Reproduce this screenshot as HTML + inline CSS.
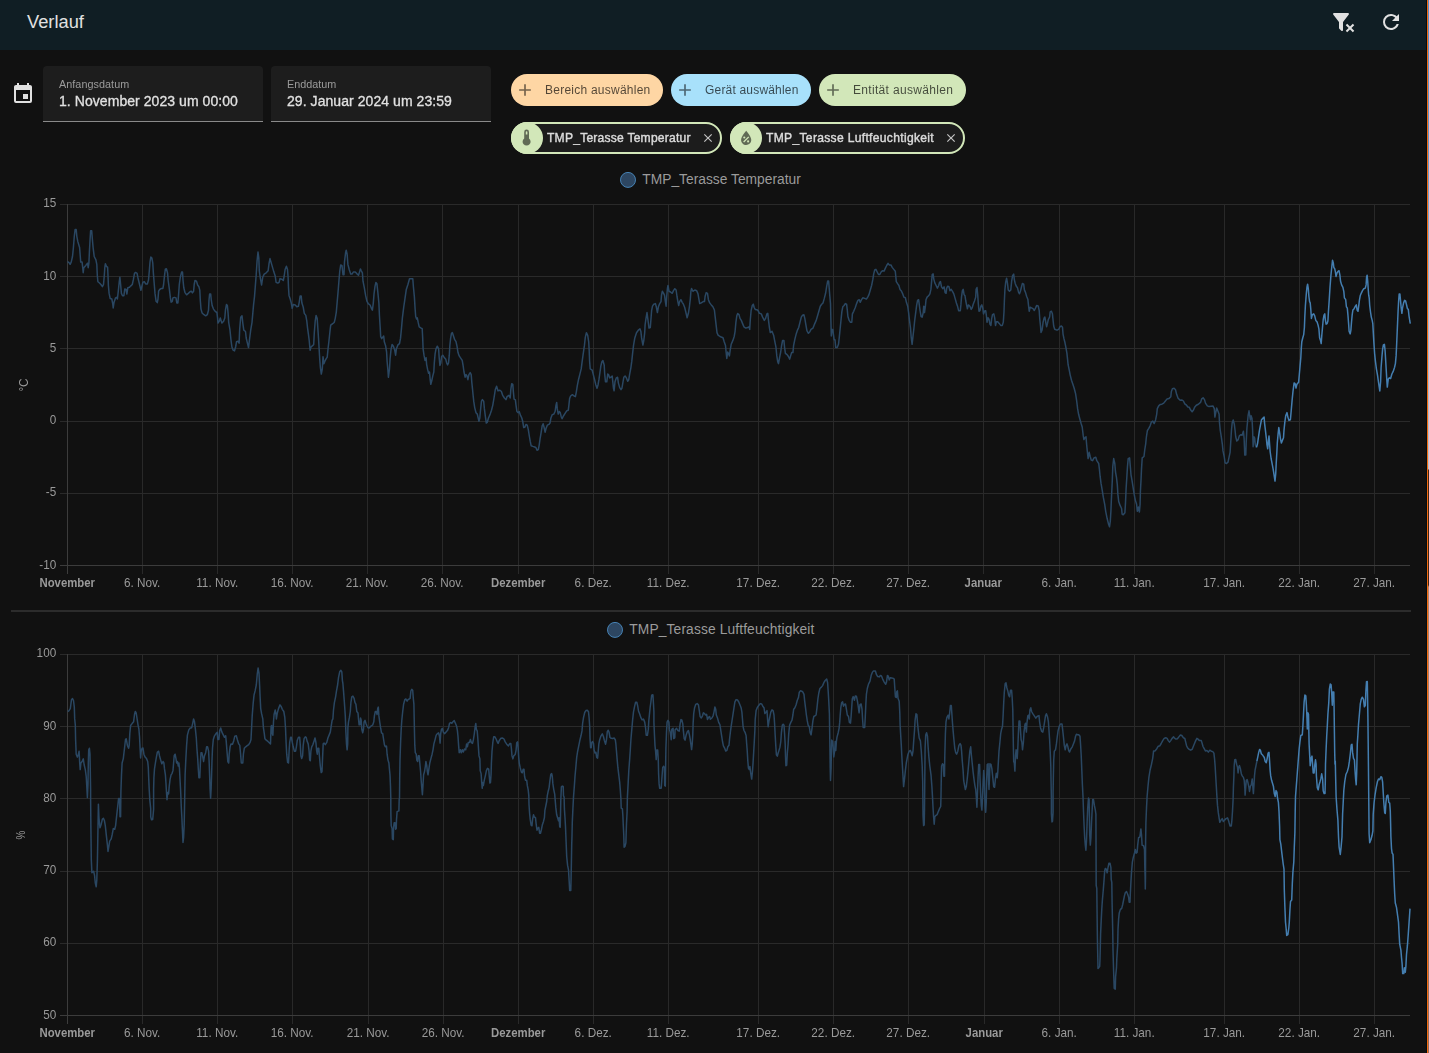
<!DOCTYPE html>
<html lang="de">
<head>
<meta charset="utf-8">
<title>Verlauf – Home Assistant</title>
<style>
html,body{margin:0;padding:0;background:#111111;}
body{width:1429px;height:1053px;overflow:hidden;position:relative;font-family:"Liberation Sans",sans-serif;color:#e1e1e1;}
#app{position:absolute;left:0;top:0;width:1429px;height:1053px;overflow:hidden;background:#111111;}
header{position:absolute;left:0;top:0;width:1427px;height:50px;background:#101e24;}
.grp{position:static;display:block;margin:0;padding:0;font:inherit;}
.t{position:absolute;white-space:pre;line-height:1;font-weight:400;}
.ic{position:absolute;display:block;}
.field{position:absolute;top:66px;width:220px;height:55px;background:#1d1d1d;border-radius:4px 4px 0 0;border-bottom:1px solid #8a8a8a;}
.chip{position:absolute;height:32px;border-radius:16px;box-sizing:border-box;}
.chip.sel{border:2px solid #d2e7b9;background:#1c1c1c;}
.chip .lead{position:absolute;left:-2px;top:-2px;width:32px;height:32px;border-radius:50%;background:#d2e7b9;}
svg.charts{position:absolute;left:0;top:160px;}
svg.charts text{font-family:"Liberation Sans",sans-serif;}
.tk{font-size:12.3px;fill:#9b9b9b;}
.tk.b{font-weight:700;}
.lg{font-size:13.8px;fill:#9b9b9b;}
.edge{position:absolute;top:0;width:1px;height:1053px;}
</style>
</head>
<body>
<div id="app">
<header class="toolbar">
<h1 class="grp"><span class="t" style="left:27px;top:12.51px;font-size:18.3px;color:#e1e1e1;">Verlauf</span></h1>
<div class="grp" role="button" aria-label="Filter entfernen"><svg class="ic" style="left:1331px;top:10px;width:24px;height:24px;" viewBox="0 0 24 24"><path fill="#e1e1e1" d="M14.76,20.83L17.6,18L14.76,15.17L16.17,13.76L19,16.57L21.83,13.76L23.24,15.17L20.43,18L23.24,20.83L21.83,22.24L19,19.4L16.17,22.24L14.76,20.83M12,12V19.88C12.04,20.18 11.94,20.5 11.71,20.71C11.32,21.1 10.69,21.1 10.3,20.71L8.29,18.7C8.06,18.47 7.96,18.16 8,17.87V12H7.97L2.21,4.62C1.87,4.19 1.95,3.56 2.38,3.22C2.57,3.08 2.78,3 3,3V3H17V3C17.22,3 17.43,3.08 17.62,3.22C18.05,3.56 18.13,4.19 17.79,4.62L12.03,12H12Z"/></svg></div>
<div class="grp" role="button" aria-label="Aktualisieren"><svg class="ic" style="left:1379px;top:10px;width:24px;height:24px;" viewBox="0 0 24 24"><path fill="#e1e1e1" d="M17.65,6.35C16.2,4.9 14.21,4 12,4A8,8 0 0,0 4,12A8,8 0 0,0 12,20C15.73,20 18.84,17.45 19.73,14H17.65C16.83,16.33 14.61,18 12,18A6,6 0 0,1 6,12A6,6 0 0,1 12,6C13.66,6 15.14,6.69 16.22,7.78L13,11H20V4L17.65,6.35Z"/></svg></div>
</header>
<main>
<section class="filters">
<div class="grp date-range-picker">
<svg class="ic" style="left:11px;top:81.7px;width:24px;height:24px;" viewBox="0 0 24 24"><path fill="#e1e1e1" d="M19,19H5V8H19M16,1V3H8V1H6V3H5C3.89,3 3,3.89 3,5V19A2,2 0 0,0 5,21H19A2,2 0 0,0 21,19V5C21,3.89 20.1,3 19,3H18V1M17,12H12V17H17V12Z"/></svg>
<label class="grp textfield">
<div class="field" style="left:43px"></div>
<span class="t" style="left:59px;top:79px;font-size:10.8px;color:#9b9b9b;letter-spacing:0.05px;will-change:transform;">Anfangsdatum</span>
<span class="t" style="left:59px;top:94px;font-size:14px;color:#e1e1e1;letter-spacing:0.06px;-webkit-text-stroke:0.3px #e1e1e1;will-change:transform;">1. November 2023 um 00:00</span>
</label>
<label class="grp textfield">
<div class="field" style="left:271px"></div>
<span class="t" style="left:287px;top:79px;font-size:10.8px;color:#9b9b9b;will-change:transform;">Enddatum</span>
<span class="t" style="left:287px;top:94px;font-size:14px;color:#e1e1e1;letter-spacing:0.06px;-webkit-text-stroke:0.3px #e1e1e1;will-change:transform;">29. Januar 2024 um 23:59</span>
</label>
</div>
<div class="grp target-picker">
<div class="grp add-chips">
<div class="grp" role="button">
<div class="chip" style="left:511px;top:74px;width:152px;background:#fed6a4"></div>
<svg class="ic" style="left:515px;top:80px;width:20px;height:20px;" viewBox="0 0 24 24"><path fill="rgba(0,0,0,0.54)" d="M19,13H13V19H11V13H5V11H11V5H13V11H19V13Z"/></svg>
<span class="t" style="left:545px;top:84px;font-size:12px;color:rgba(0,0,0,0.68);letter-spacing:0.24px;will-change:transform;">Bereich auswählen</span>
</div>
<div class="grp" role="button">
<div class="chip" style="left:671px;top:74px;width:140px;background:#a8e1fb"></div>
<svg class="ic" style="left:675px;top:80px;width:20px;height:20px;" viewBox="0 0 24 24"><path fill="rgba(0,0,0,0.54)" d="M19,13H13V19H11V13H5V11H11V5H13V11H19V13Z"/></svg>
<span class="t" style="left:705px;top:84px;font-size:12px;color:rgba(0,0,0,0.68);letter-spacing:0.19px;will-change:transform;">Gerät auswählen</span>
</div>
<div class="grp" role="button">
<div class="chip" style="left:819px;top:74px;width:147px;background:#d2e7b9"></div>
<svg class="ic" style="left:823px;top:80px;width:20px;height:20px;" viewBox="0 0 24 24"><path fill="rgba(0,0,0,0.54)" d="M19,13H13V19H11V13H5V11H11V5H13V11H19V13Z"/></svg>
<span class="t" style="left:853px;top:84px;font-size:12px;color:rgba(0,0,0,0.68);letter-spacing:0.32px;will-change:transform;">Entität auswählen</span>
</div>
</div>
<div class="grp selected-chips">
<div class="grp entity-chip">
<div class="chip sel" style="left:511px;top:122px;width:211px"><div class="lead"></div></div>
<svg class="ic" style="left:517.4px;top:128.4px;width:19.2px;height:19.2px;" viewBox="0 0 24 24"><path fill="rgba(0,0,0,0.54)" d="M15 13V5A3 3 0 0 0 9 5V13A5 5 0 1 0 15 13M12 4A1 1 0 0 1 13 5V8H11V5A1 1 0 0 1 12 4Z"/></svg>
<span class="t" style="left:547px;top:132px;font-size:12.1px;color:#dcdcdc;letter-spacing:0.22px;-webkit-text-stroke:0.4px #dcdcdc;will-change:transform;">TMP_Terasse Temperatur</span>
<svg class="ic" style="left:701px;top:131.2px;width:14px;height:14px;" viewBox="0 0 24 24"><path fill="#c4c4c4" d="M19,6.41L17.59,5L12,10.59L6.41,5L5,6.41L10.59,12L5,17.59L6.41,19L12,13.41L17.59,19L19,17.59L13.41,12L19,6.41Z"/></svg>
</div>
<div class="grp entity-chip">
<div class="chip sel" style="left:730px;top:122px;width:235px"><div class="lead"></div></div>
<svg class="ic" style="left:735.9px;top:128.1px;width:20.4px;height:20.4px;" viewBox="0 0 24 24"><path fill="rgba(0,0,0,0.54)" d="M12,3.25C12,3.25 6,10 6,14C6,17.32 8.69,20 12,20A6,6 0 0,0 18,14C18,10 12,3.25 12,3.25M14.47,9.97L15.53,11.03L9.53,17.03L8.47,15.97M9.75,10A1.25,1.25 0 0,1 11,11.25A1.25,1.25 0 0,1 9.75,12.5A1.25,1.25 0 0,1 8.5,11.25A1.25,1.25 0 0,1 9.75,10M14.25,14.5A1.25,1.25 0 0,1 15.5,15.75A1.25,1.25 0 0,1 14.25,17A1.25,1.25 0 0,1 13,15.75A1.25,1.25 0 0,1 14.25,14.5Z"/></svg>
<span class="t" style="left:766px;top:132px;font-size:12.1px;color:#dcdcdc;letter-spacing:0.31px;-webkit-text-stroke:0.4px #dcdcdc;will-change:transform;">TMP_Terasse Luftfeuchtigkeit</span>
<svg class="ic" style="left:944px;top:131.2px;width:14px;height:14px;" viewBox="0 0 24 24"><path fill="#c4c4c4" d="M19,6.41L17.59,5L12,10.59L6.41,5L5,6.41L10.59,12L5,17.59L6.41,19L12,13.41L17.59,19L19,17.59L13.41,12L19,6.41Z"/></svg>
</div>
</div>
</div>
</section>
<section class="history">
<svg class="charts" width="1429" height="893" viewBox="0 160 1429 893">
<g id="chart-temperature">
<g class="grid" stroke-width="1" shape-rendering="crispEdges"><line x1="142.5" y1="204.0" x2="142.5" y2="573.5" stroke="#292929"/><line x1="217.5" y1="204.0" x2="217.5" y2="573.5" stroke="#292929"/><line x1="292.5" y1="204.0" x2="292.5" y2="573.5" stroke="#292929"/><line x1="367.5" y1="204.0" x2="367.5" y2="573.5" stroke="#292929"/><line x1="442.5" y1="204.0" x2="442.5" y2="573.5" stroke="#292929"/><line x1="518.5" y1="204.0" x2="518.5" y2="573.5" stroke="#292929"/><line x1="593.5" y1="204.0" x2="593.5" y2="573.5" stroke="#292929"/><line x1="668.5" y1="204.0" x2="668.5" y2="573.5" stroke="#292929"/><line x1="758.5" y1="204.0" x2="758.5" y2="573.5" stroke="#292929"/><line x1="833.5" y1="204.0" x2="833.5" y2="573.5" stroke="#292929"/><line x1="908.5" y1="204.0" x2="908.5" y2="573.5" stroke="#292929"/><line x1="983.5" y1="204.0" x2="983.5" y2="573.5" stroke="#292929"/><line x1="1059.5" y1="204.0" x2="1059.5" y2="573.5" stroke="#292929"/><line x1="1134.5" y1="204.0" x2="1134.5" y2="573.5" stroke="#292929"/><line x1="1224.5" y1="204.0" x2="1224.5" y2="573.5" stroke="#292929"/><line x1="1299.5" y1="204.0" x2="1299.5" y2="573.5" stroke="#292929"/><line x1="1374.5" y1="204.0" x2="1374.5" y2="573.5" stroke="#292929"/><line x1="60" y1="204.5" x2="1410.0" y2="204.5" stroke="#2a2a2a"/><line x1="60" y1="276.5" x2="1410.0" y2="276.5" stroke="#2a2a2a"/><line x1="60" y1="348.5" x2="1410.0" y2="348.5" stroke="#2a2a2a"/><line x1="60" y1="421.5" x2="1410.0" y2="421.5" stroke="#2a2a2a"/><line x1="60" y1="493.5" x2="1410.0" y2="493.5" stroke="#2a2a2a"/><line x1="67.5" y1="204.0" x2="67.5" y2="573.5" stroke="#3c3c3c"/><line x1="60" y1="565.5" x2="1410.0" y2="565.5" stroke="#3c3c3c"/></g>
<path class="series" d="M67.5,261.5 69.0,262.6 70.1,264.3 71.2,262.1 72.5,256.5 73.4,247.5 74.3,236.3 75.1,229.6 76.2,229.6 76.8,236.3 77.9,241.9 79.6,247.5 80.2,255.3 80.7,262.1 82.1,262.1 82.7,267.7 83.2,272.7 83.8,267.7 85.8,265.4 87.5,263.2 88.2,267.7 88.9,263.2 89.4,252.0 90.0,240.8 90.6,230.7 91.7,230.7 92.3,238.5 93.1,247.5 94.2,256.5 95.9,259.8 96.8,264.3 97.3,275.5 97.9,281.7 99.2,282.8 100.9,284.5 102.4,286.7 103.5,284.5 104.3,275.5 104.8,267.7 105.4,263.7 106.5,266.5 107.6,267.1 108.0,275.5 108.4,285.6 109.1,293.4 110.2,298.5 111.8,299.0 112.7,303.5 113.2,308.0 114.0,302.4 115.5,297.9 116.6,297.4 117.4,299.0 118.3,291.2 119.2,282.2 119.9,277.2 120.5,283.3 121.4,293.4 122.5,295.7 123.9,295.7 124.8,288.9 126.1,289.5 126.9,294.0 127.8,287.8 129.5,287.3 130.6,286.1 132.3,284.5 133.4,279.4 134.5,273.3 135.6,272.4 137.1,273.3 137.9,277.7 139.0,282.2 140.1,286.7 140.9,290.3 141.8,286.7 142.9,282.2 144.3,281.7 145.7,283.9 147.4,283.9 148.5,280.0 149.3,271.0 150.0,262.1 150.8,257.0 151.9,258.1 152.8,263.2 153.3,272.1 154.1,282.2 155.0,293.4 156.1,301.3 157.3,302.6 158.0,299.0 158.6,291.2 159.7,289.5 161.4,288.4 162.9,288.4 163.6,284.5 164.4,276.6 165.3,269.3 166.4,268.8 167.6,273.3 168.1,280.0 169.2,287.8 170.4,297.9 171.1,302.2 172.3,301.3 172.9,297.9 174.5,297.4 176.0,297.9 176.8,303.0 177.9,303.0 178.5,295.7 179.3,284.5 180.4,276.6 181.6,272.1 182.5,272.1 183.0,280.0 183.8,287.8 184.9,292.3 186.6,294.8 188.3,293.4 190.0,291.8 191.3,291.2 192.4,292.9 193.6,291.2 194.2,284.5 195.0,280.5 196.5,281.1 197.6,285.0 198.9,286.7 199.8,290.1 200.3,300.2 201.0,309.1 202.1,313.0 204.0,314.7 205.7,315.8 207.3,314.7 208.5,310.2 209.0,300.2 209.6,294.0 210.7,294.0 211.3,300.2 212.2,305.8 213.5,309.1 215.2,311.4 216.9,312.5 217.5,317.3 218.0,323.1 219.3,321.2 220.3,318.0 221.9,323.1 223.6,321.2 224.8,318.0 225.5,309.6 226.5,304.4 227.4,305.7 228.1,313.4 228.7,322.5 230.0,330.2 230.9,339.3 231.9,347.0 233.2,350.2 234.5,350.9 235.6,347.0 236.5,341.8 238.1,341.2 239.1,343.1 239.7,328.9 240.7,317.3 242.0,315.8 242.9,323.8 243.8,330.2 245.5,331.5 246.2,338.0 247.4,343.1 248.5,347.6 249.4,340.5 250.7,330.2 252.0,322.5 252.9,312.1 253.6,304.4 254.5,296.6 255.2,287.6 256.2,274.7 257.1,260.5 258.0,252.1 258.8,257.9 259.3,270.8 260.4,278.6 261.6,285.0 262.7,277.3 264.2,274.1 266.2,272.8 268.1,270.8 269.1,263.1 270.0,258.6 271.3,263.1 272.6,267.6 273.9,272.1 275.2,276.0 276.1,282.4 277.8,283.1 279.1,282.4 280.0,278.6 281.7,279.2 283.3,280.5 284.2,276.0 285.1,269.5 286.4,266.3 287.5,269.5 288.1,277.3 288.5,287.6 289.0,295.4 290.3,299.2 291.3,303.1 292.2,308.3 293.3,304.4 295.2,305.0 296.8,306.7 298.4,306.3 299.3,301.8 300.1,296.0 301.2,296.0 301.9,303.1 303.2,307.0 304.3,313.4 305.8,315.4 306.8,321.2 307.5,327.6 308.4,334.1 309.2,340.5 310.1,350.2 311.0,347.0 312.6,345.7 313.7,344.4 314.3,332.8 315.2,321.2 316.1,315.4 317.2,318.6 317.8,327.6 318.5,338.0 319.1,348.3 319.7,358.6 320.4,367.7 321.3,374.1 322.3,369.0 323.0,356.7 323.9,363.8 324.9,361.2 326.2,358.6 327.2,357.3 328.1,348.3 329.0,340.5 330.1,330.2 330.7,325.1 332.4,323.8 334.2,322.5 335.2,318.6 336.3,312.1 337.2,301.8 338.1,291.5 338.9,281.2 339.8,270.8 340.7,265.0 342.0,265.7 343.0,274.7 344.0,274.7 344.5,261.8 345.6,252.7 346.2,250.2 347.1,254.0 347.9,264.4 349.2,269.5 350.7,274.1 352.0,274.1 353.3,272.1 355.3,272.1 357.2,274.1 358.5,275.3 359.5,272.1 360.4,268.9 361.3,270.8 362.4,272.8 363.0,281.2 364.3,287.6 365.6,295.4 366.9,301.2 368.2,303.7 370.1,305.0 371.4,308.3 372.4,310.2 373.3,303.1 374.0,294.1 375.0,286.3 375.9,282.4 376.9,283.7 377.9,292.8 378.9,303.1 379.4,314.7 380.2,327.6 380.7,336.7 381.7,338.6 383.7,336.0 384.3,341.8 385.6,345.7 386.6,352.2 387.1,361.2 387.9,370.2 388.4,377.3 389.5,369.0 390.1,358.6 391.0,349.6 392.1,344.4 393.4,346.2 394.7,350.1 395.6,355.2 396.4,348.8 397.9,344.9 399.5,343.6 400.5,338.4 401.5,328.1 402.4,317.8 403.7,307.4 405.0,298.4 406.3,289.4 408.0,284.2 409.5,278.8 412.8,278.8 413.4,286.8 414.4,297.1 415.1,308.7 415.7,316.5 416.6,319.1 417.3,317.8 418.3,322.9 419.2,326.8 421.2,328.1 422.2,328.7 422.7,338.4 423.1,348.8 424.0,355.2 425.0,360.4 426.1,357.8 426.6,364.3 427.6,369.4 428.6,373.3 429.5,372.0 430.2,379.7 430.8,384.3 431.7,381.0 432.8,375.9 433.8,372.0 434.3,363.0 435.1,353.9 436.0,348.8 437.3,346.2 438.6,348.8 439.2,357.8 439.9,365.5 440.8,363.0 441.6,356.5 442.8,355.2 444.4,357.8 445.7,359.1 446.7,363.0 447.6,364.9 448.5,363.0 449.3,355.2 449.8,346.2 450.6,338.4 451.5,333.3 452.4,332.6 453.4,335.8 454.7,339.7 456.0,341.7 457.0,346.2 458.0,352.6 459.2,355.9 460.5,357.8 462.2,360.4 463.1,365.5 464.0,372.0 465.1,377.2 466.1,374.6 467.0,375.9 467.9,379.7 468.9,374.6 470.2,372.6 471.2,374.6 471.8,382.3 472.5,388.8 473.1,395.2 473.8,401.7 474.7,407.6 476.0,412.8 477.3,414.1 478.2,418.0 478.9,421.2 479.8,418.0 480.5,410.2 481.5,401.2 482.4,399.6 483.7,401.2 484.4,408.9 485.4,416.7 486.3,423.1 487.2,422.5 488.5,418.0 490.2,414.1 491.5,410.2 492.8,405.1 494.1,397.3 495.3,389.6 496.6,386.3 497.9,390.8 499.9,390.2 501.4,391.5 502.7,395.4 504.4,398.0 506.1,399.6 507.0,396.7 508.9,395.4 510.2,398.0 510.8,389.6 511.7,383.7 512.8,384.4 513.4,392.1 514.1,399.2 515.4,399.9 516.0,405.1 516.9,411.5 518.2,412.8 519.2,411.5 520.5,415.4 521.8,418.0 522.8,421.8 523.7,427.6 525.0,427.0 525.9,424.4 527.2,425.1 528.3,429.6 529.3,436.0 530.2,441.2 531.1,445.7 532.8,446.4 534.7,447.0 536.0,447.7 537.0,450.2 538.3,449.6 539.2,445.1 540.1,438.6 541.2,432.2 542.2,425.7 543.1,423.8 544.0,427.0 545.1,432.2 546.1,428.3 547.4,425.1 548.9,424.4 550.0,423.1 550.9,418.0 552.2,414.7 553.8,414.1 555.1,411.5 556.0,405.1 556.7,402.5 557.3,408.9 558.2,414.1 559.3,411.5 560.3,412.8 561.2,416.7 562.1,418.6 563.4,416.0 565.1,413.4 566.7,410.9 568.3,410.2 568.9,405.1 569.6,398.6 570.6,396.0 572.4,394.7 574.1,396.0 575.4,396.7 576.3,392.1 577.3,385.7 578.6,379.2 579.9,374.1 581.2,368.9 582.2,361.2 583.1,354.7 584.4,345.7 585.3,337.3 586.4,332.7 587.7,335.3 588.7,341.8 589.2,350.8 589.6,361.2 590.2,368.9 592.2,370.2 593.5,375.4 594.8,380.5 595.7,384.4 597.0,388.3 598.0,385.0 599.0,379.2 599.9,372.8 600.8,366.3 601.9,361.8 602.9,360.5 604.2,365.0 604.7,374.1 605.5,381.8 606.8,381.8 607.7,374.1 608.6,374.7 609.6,377.9 610.9,377.3 612.2,376.0 612.8,381.8 613.5,388.3 614.1,390.8 615.0,381.8 616.3,377.9 617.6,377.3 618.4,383.1 619.7,387.6 621.0,389.6 621.9,388.3 622.8,383.1 623.8,377.3 625.1,376.0 626.4,377.9 627.7,381.2 628.7,379.9 629.6,374.7 630.9,367.6 631.8,361.2 632.6,353.4 633.5,345.7 634.8,337.9 636.5,332.7 638.3,330.2 640.0,328.9 640.9,331.5 641.6,337.9 642.9,345.0 643.8,340.5 644.7,332.7 645.1,324.9 646.0,318.4 647.0,312.6 648.1,321.0 649.0,328.1 650.3,327.5 650.9,319.7 651.6,310.7 652.5,306.2 653.8,304.2 655.4,303.6 656.3,306.8 657.4,312.6 658.4,306.8 659.7,303.6 661.0,301.6 661.5,295.2 662.3,291.3 663.2,292.6 664.5,295.2 665.4,301.6 666.1,306.2 666.7,296.5 667.4,288.7 668.0,285.5 669.0,291.3 670.5,292.0 672.2,293.3 673.5,290.7 674.8,288.7 676.1,290.0 677.0,296.5 678.0,302.3 678.7,305.5 679.6,301.6 680.9,299.7 682.2,302.3 683.4,304.2 684.7,307.5 685.8,312.0 687.1,317.8 688.4,313.3 689.4,306.8 690.3,299.1 690.9,291.3 691.6,288.5 692.9,291.3 694.8,290.0 696.7,290.7 698.0,293.9 698.9,299.1 699.7,303.6 701.3,302.9 703.2,301.6 704.5,301.6 705.1,296.5 706.2,292.6 707.5,293.3 708.4,299.7 709.7,302.9 711.3,304.9 712.9,306.8 714.4,310.0 715.2,317.1 716.1,324.9 717.0,332.6 718.1,335.2 720.0,336.5 721.7,337.2 723.0,337.8 724.2,341.7 725.5,345.5 726.1,352.0 726.8,358.5 727.7,352.0 728.4,353.3 729.4,355.9 730.3,349.4 731.2,344.3 732.9,340.4 734.2,336.5 735.1,331.3 735.9,322.3 736.8,315.8 737.7,313.5 739.0,314.6 740.0,318.4 741.3,320.4 742.6,323.6 743.9,326.8 745.8,328.1 747.7,327.5 749.0,326.8 749.7,329.4 750.3,319.7 751.1,310.7 752.3,305.5 753.3,304.2 754.2,307.5 755.2,309.4 756.8,309.7 758.1,310.7 759.4,313.3 761.3,313.9 762.6,317.1 764.3,320.4 765.6,318.4 766.9,313.9 767.8,313.3 768.4,319.7 769.4,327.5 770.3,332.6 772.0,331.3 773.6,335.2 774.6,340.4 775.9,346.8 776.8,355.9 777.7,361.7 778.5,363.6 779.4,358.5 780.7,352.0 781.6,345.5 782.6,340.4 783.9,340.4 784.5,346.8 785.4,353.3 787.1,354.6 788.4,356.5 789.7,359.1 790.6,355.9 791.6,352.6 792.9,352.6 793.6,345.5 794.9,339.1 796.2,333.9 797.5,330.1 798.7,327.5 800.0,322.3 801.3,317.1 802.6,315.2 803.9,314.8 804.8,318.4 805.9,324.9 806.9,330.7 808.4,333.3 809.7,332.0 811.0,329.4 813.0,328.1 814.2,324.9 816.2,320.4 817.7,315.2 819.0,310.7 820.3,306.2 821.7,304.2 823.0,303.0 824.3,298.4 825.6,293.3 826.6,286.8 827.7,281.0 828.6,281.0 829.2,288.1 829.8,295.8 830.5,303.6 830.9,320.4 831.3,335.9 832.0,329.4 832.8,329.4 833.3,333.3 834.1,339.7 835.0,339.7 835.7,347.5 837.2,347.5 838.5,344.3 839.3,337.2 840.2,328.1 841.1,319.1 841.9,311.3 842.8,306.8 844.1,305.5 845.3,303.6 846.6,304.2 847.3,310.1 847.9,316.5 849.2,320.4 850.5,322.3 851.8,322.3 852.4,313.9 853.7,311.3 855.3,307.5 856.6,303.6 857.9,300.4 859.2,299.7 860.2,302.3 861.5,299.7 862.8,297.8 864.7,298.4 866.4,299.1 867.7,297.1 869.0,294.6 870.3,290.0 871.6,285.5 872.8,279.7 873.7,273.9 874.7,270.0 875.9,269.4 877.2,272.0 878.5,274.5 879.8,274.5 881.1,272.0 882.4,270.7 884.1,271.1 885.4,268.1 886.7,265.5 888.0,263.3 889.2,264.9 890.9,264.9 892.2,267.4 893.8,269.4 895.3,271.3 895.8,276.5 896.3,281.6 897.6,283.6 898.9,285.5 900.0,289.4 901.2,290.7 902.5,293.3 903.8,297.1 905.4,297.8 906.4,302.3 907.7,306.2 908.6,312.6 909.5,320.4 910.5,328.1 911.2,337.2 912.1,344.3 912.9,337.2 913.8,329.4 914.7,320.4 915.7,312.6 916.7,304.9 917.6,300.4 918.6,299.7 919.3,304.9 920.2,311.3 921.1,316.5 922.2,317.2 923.2,312.6 923.7,306.2 924.5,312.6 925.4,306.2 926.0,299.7 927.1,297.1 928.6,295.8 929.9,293.9 930.9,289.4 931.6,281.6 932.2,274.5 933.1,273.9 933.8,279.1 934.8,282.9 936.1,285.5 937.4,288.1 938.7,285.5 939.6,282.3 940.5,281.6 941.5,286.8 942.8,288.7 944.1,286.8 945.1,292.6 946.1,293.3 946.7,288.1 947.7,286.2 949.0,286.8 949.9,290.7 951.2,289.4 952.5,291.3 953.8,293.9 955.1,298.4 956.4,303.0 957.7,306.8 958.6,310.7 960.3,310.7 960.9,304.9 961.5,297.1 962.4,290.7 963.2,289.4 964.1,294.6 965.0,295.8 965.8,301.0 966.7,305.5 967.4,308.8 968.4,304.9 969.9,306.2 971.2,309.4 972.3,307.5 973.2,304.2 974.5,301.0 975.7,297.1 976.1,289.4 977.0,287.5 977.7,294.6 978.3,303.6 979.0,311.3 980.0,310.7 980.9,306.2 981.8,304.9 982.9,308.8 983.5,313.9 984.8,310.7 985.7,310.7 986.5,316.5 987.0,322.3 988.0,317.8 989.0,319.1 990.0,324.3 990.9,325.5 991.6,319.1 992.5,314.6 993.8,313.9 994.7,317.8 995.5,325.5 996.4,321.7 997.7,321.7 999.2,323.4 1000.7,325.4 1002.3,325.4 1003.3,322.1 1004.0,311.8 1004.4,300.2 1004.9,289.9 1005.7,282.1 1006.6,278.2 1007.5,283.4 1008.2,289.9 1009.5,291.2 1010.8,289.9 1011.7,280.8 1012.6,275.7 1013.7,274.1 1014.3,279.5 1015.2,283.4 1016.2,286.0 1017.5,287.9 1018.6,292.4 1019.5,293.7 1020.4,291.2 1021.4,287.3 1022.4,283.4 1023.7,284.1 1024.4,289.9 1025.5,292.4 1026.6,296.3 1027.9,299.5 1028.5,305.4 1029.2,311.2 1030.2,307.3 1031.5,307.9 1033.0,308.6 1034.3,310.5 1035.6,307.9 1036.6,305.6 1038.2,306.0 1039.2,310.5 1039.7,318.3 1040.5,326.0 1041.0,332.5 1042.1,329.9 1043.1,322.1 1044.0,318.3 1044.9,317.0 1045.7,322.1 1046.6,326.7 1047.5,323.4 1048.3,319.6 1049.6,317.0 1050.2,311.8 1051.4,311.2 1052.4,313.7 1053.0,319.6 1053.7,326.0 1054.7,329.2 1056.3,329.9 1057.6,329.9 1058.8,329.2 1059.9,326.7 1061.4,326.0 1062.5,327.3 1063.0,333.8 1064.0,338.9 1065.0,342.8 1066.0,348.0 1066.9,353.1 1067.6,359.6 1068.1,364.7 1069.2,369.9 1070.2,375.1 1071.5,380.2 1072.8,384.1 1074.1,388.0 1075.5,393.2 1076.6,400.3 1077.6,408.7 1078.6,414.3 1079.7,418.5 1081.1,423.5 1082.2,427.0 1083.2,435.4 1083.9,439.6 1085.0,437.5 1086.0,436.8 1086.7,445.2 1087.4,452.3 1088.1,458.6 1089.2,452.3 1090.2,456.5 1091.2,460.0 1092.6,460.7 1094.0,457.9 1095.8,457.2 1096.8,460.7 1098.7,463.5 1099.4,469.1 1100.1,476.2 1101.0,483.2 1102.2,490.2 1103.3,497.2 1104.7,504.3 1105.7,511.3 1107.1,518.3 1108.5,524.0 1109.5,526.8 1110.3,521.1 1110.9,511.3 1111.3,501.5 1111.7,493.0 1112.3,480.4 1112.8,466.3 1113.7,458.6 1114.8,463.5 1115.5,472.0 1116.5,477.6 1117.3,484.6 1117.9,494.4 1118.7,501.5 1120.2,505.7 1121.6,508.5 1122.1,514.1 1123.2,514.8 1124.9,512.7 1125.5,502.9 1126.1,488.8 1126.8,477.6 1127.5,466.3 1128.2,458.6 1129.6,457.9 1130.3,466.3 1131.0,474.8 1132.0,480.4 1133.1,487.4 1134.2,494.4 1135.3,500.1 1136.6,504.3 1137.3,511.3 1138.4,507.1 1139.4,512.0 1140.1,504.3 1140.4,491.6 1141.0,480.4 1141.5,469.1 1142.2,457.9 1144.0,456.5 1144.8,449.5 1145.7,443.8 1146.4,436.8 1147.4,430.5 1148.8,428.4 1150.2,425.6 1151.4,422.1 1152.8,421.1 1154.2,423.5 1155.6,419.9 1156.7,414.3 1157.3,408.7 1158.7,405.9 1160.1,404.5 1161.9,404.2 1163.7,403.1 1165.4,401.0 1167.1,398.9 1168.9,398.6 1170.8,396.8 1171.3,391.8 1172.4,388.7 1174.1,388.3 1175.5,389.7 1176.7,394.6 1178.1,398.2 1180.2,400.3 1182.0,400.0 1183.4,401.0 1184.8,403.8 1186.5,405.2 1187.9,407.0 1189.3,407.3 1190.7,410.1 1192.1,411.8 1193.5,410.1 1194.6,407.3 1196.3,405.2 1198.4,404.2 1200.5,402.4 1201.7,398.9 1203.1,397.7 1204.5,399.6 1205.5,403.1 1207.3,405.9 1209.0,406.6 1211.1,406.2 1212.9,405.9 1214.3,408.7 1214.9,417.1 1215.7,412.9 1216.7,408.0 1218.1,411.5 1219.1,414.3 1219.5,422.8 1220.2,429.8 1221.3,436.8 1222.3,443.8 1223.0,450.9 1224.2,456.5 1225.1,462.8 1226.5,463.5 1228.0,462.1 1228.9,457.9 1230.1,452.3 1230.8,441.0 1231.5,429.8 1232.2,422.8 1233.2,419.9 1234.3,424.2 1235.0,429.8 1235.7,436.8 1236.8,441.0 1238.2,439.6 1239.2,436.1 1240.6,434.7 1242.0,435.4 1243.4,431.2 1244.1,438.2 1244.8,455.1 1245.8,455.1 1246.2,442.4 1246.9,428.4 1248.1,415.7 1249.0,410.8 1249.7,415.7 1250.4,419.9 1251.1,415.7 1252.0,418.5 1252.6,429.8 1253.1,446.7 1254.0,436.8 1254.7,438.2 1255.4,445.2 1256.5,447.4" fill="none" stroke="#2a4762" stroke-width="1.5" stroke-linejoin="round" stroke-linecap="butt"/>
<path class="series" d="M1256.5,447.4 1257.5,443.8 1258.5,436.8 1259.5,430.1 1260.5,424.9 1261.5,419.7 1262.8,418.4 1264.1,417.1 1264.6,423.6 1265.4,430.1 1266.3,437.8 1266.9,444.3 1267.7,448.8 1268.5,440.4 1269.0,435.9 1269.5,443.0 1270.2,452.0 1271.1,458.5 1272.1,463.6 1273.1,468.8 1274.1,475.2 1275.0,481.1 1275.7,474.0 1276.2,463.6 1276.8,453.3 1277.3,443.0 1278.1,433.9 1278.8,427.5 1279.6,432.6 1280.5,439.1 1281.4,443.0 1282.4,440.4 1283.5,437.8 1284.0,430.1 1284.8,422.3 1285.7,415.8 1287.0,412.6 1287.9,417.1 1288.9,420.4 1290.4,419.7 1291.2,410.7 1292.1,400.4 1293.0,391.3 1294.1,382.9 1295.1,383.6 1296.0,388.1 1296.9,384.2 1298.6,382.3 1299.2,375.8 1300.0,366.8 1300.8,357.7 1301.3,348.1 1301.8,341.7 1302.8,337.8 1303.7,334.6 1304.4,327.5 1304.8,317.1 1305.4,305.5 1306.3,293.9 1307.0,286.8 1307.6,284.2 1308.3,288.7 1308.9,296.5 1309.6,301.6 1310.2,302.9 1310.8,309.4 1311.4,318.4 1312.4,314.6 1313.7,313.9 1314.7,315.8 1315.8,320.4 1317.0,321.7 1318.0,324.9 1318.9,328.8 1319.6,337.8 1320.5,340.4 1321.2,343.6 1321.8,335.2 1322.5,327.5 1323.2,319.7 1324.0,315.2 1324.8,313.9 1325.3,319.7 1326.1,324.2 1327.1,323.6 1327.9,321.0 1328.4,312.0 1329.2,300.4 1330.0,287.4 1330.9,275.8 1331.8,266.8 1332.5,260.3 1333.3,262.9 1333.8,267.4 1334.7,268.7 1335.4,271.9 1336.0,276.5 1336.9,273.2 1338.0,271.3 1339.0,270.7 1339.9,275.2 1340.5,281.0 1341.6,284.9 1342.9,287.4 1343.8,291.3 1344.4,297.8 1345.7,299.7 1346.4,306.8 1347.3,308.1 1348.0,315.8 1348.6,323.6 1349.1,331.3 1350.2,333.9 1350.9,330.1 1351.5,322.3 1352.2,314.6 1352.9,310.0 1354.1,308.7 1355.4,306.2 1356.3,304.9 1357.1,310.0 1358.0,311.3 1358.6,306.8 1359.4,300.4 1360.2,295.8 1361.2,293.3 1362.5,290.7 1363.8,288.7 1365.3,288.1 1366.1,284.9 1366.6,277.1 1367.1,275.2 1367.7,281.0 1368.2,288.7 1368.7,295.2 1369.2,297.8 1369.7,305.5 1370.5,312.0 1371.3,317.1 1372.2,320.4 1372.8,323.6 1373.3,332.6 1373.9,343.0 1374.6,353.3 1375.4,361.0 1376.4,368.8 1377.5,375.2 1378.6,383.0 1379.8,391.0 1380.6,381.7 1381.1,367.5 1381.9,357.2 1382.6,349.4 1383.4,344.9 1384.4,344.3 1385.1,350.7 1385.7,361.0 1386.4,372.7 1386.9,381.7 1387.3,387.1 1387.8,383.0 1388.3,379.1 1389.4,377.8 1390.6,378.5 1391.9,374.0 1393.2,371.4 1394.5,367.5 1395.4,363.6 1396.1,355.9 1396.6,345.5 1397.1,333.9 1397.6,322.3 1398.1,310.7 1398.6,301.6 1399.2,293.9 1399.9,293.9 1400.5,300.4 1401.2,308.1 1401.9,313.3 1402.5,308.1 1403.6,302.9 1404.6,300.4 1405.6,301.0 1406.7,305.5 1407.4,308.7 1408.3,309.4 1409.0,315.8 1409.8,321.0 1410.3,323.6" fill="none" stroke="#447eb0" stroke-width="1.5" stroke-linejoin="round" stroke-linecap="butt"/>
<circle cx="628" cy="179.90" r="7.5" fill="#2d4661" stroke="#4682b4" stroke-width="1"/>
<text x="642.3" y="184.40" class="lg">TMP_Terasse Temperatur</text>
<g class="labels" style="opacity:.999"><text transform="translate(56.2,207) scale(0.955,1)" text-anchor="end" class="tk">15</text>
<text transform="translate(56.2,280) scale(0.955,1)" text-anchor="end" class="tk">10</text>
<text transform="translate(56.2,352) scale(0.955,1)" text-anchor="end" class="tk">5</text>
<text transform="translate(56.2,424) scale(0.955,1)" text-anchor="end" class="tk">0</text>
<text transform="translate(56.2,496) scale(0.955,1)" text-anchor="end" class="tk">-5</text>
<text transform="translate(56.2,569) scale(0.955,1)" text-anchor="end" class="tk">-10</text>
<text transform="translate(67.20,587) scale(0.925,1)" text-anchor="middle" class="tk b">November</text>
<text transform="translate(142.20,587) scale(0.955,1)" text-anchor="middle" class="tk">6. Nov.</text>
<text transform="translate(217.20,587) scale(0.955,1)" text-anchor="middle" class="tk">11. Nov.</text>
<text transform="translate(292.20,587) scale(0.955,1)" text-anchor="middle" class="tk">16. Nov.</text>
<text transform="translate(367.20,587) scale(0.955,1)" text-anchor="middle" class="tk">21. Nov.</text>
<text transform="translate(442.20,587) scale(0.955,1)" text-anchor="middle" class="tk">26. Nov.</text>
<text transform="translate(518.20,587) scale(0.925,1)" text-anchor="middle" class="tk b">Dezember</text>
<text transform="translate(593.20,587) scale(0.955,1)" text-anchor="middle" class="tk">6. Dez.</text>
<text transform="translate(668.20,587) scale(0.955,1)" text-anchor="middle" class="tk">11. Dez.</text>
<text transform="translate(758.20,587) scale(0.955,1)" text-anchor="middle" class="tk">17. Dez.</text>
<text transform="translate(833.20,587) scale(0.955,1)" text-anchor="middle" class="tk">22. Dez.</text>
<text transform="translate(908.20,587) scale(0.955,1)" text-anchor="middle" class="tk">27. Dez.</text>
<text transform="translate(983.20,587) scale(0.925,1)" text-anchor="middle" class="tk b">Januar</text>
<text transform="translate(1059.20,587) scale(0.955,1)" text-anchor="middle" class="tk">6. Jan.</text>
<text transform="translate(1134.20,587) scale(0.955,1)" text-anchor="middle" class="tk">11. Jan.</text>
<text transform="translate(1224.20,587) scale(0.955,1)" text-anchor="middle" class="tk">17. Jan.</text>
<text transform="translate(1299.20,587) scale(0.955,1)" text-anchor="middle" class="tk">22. Jan.</text>
<text transform="translate(1374.20,587) scale(0.955,1)" text-anchor="middle" class="tk">27. Jan.</text>
<text transform="translate(27.8,385.00) rotate(-90) scale(0.955,1)" text-anchor="middle" class="tk">°C</text></g>
</g>
<rect x="11" y="610" width="1400" height="2" fill="#2c2c2c"/>
<g id="chart-humidity">
<g class="grid" stroke-width="1" shape-rendering="crispEdges"><line x1="142.5" y1="654.0" x2="142.5" y2="1023.5" stroke="#292929"/><line x1="217.5" y1="654.0" x2="217.5" y2="1023.5" stroke="#292929"/><line x1="292.5" y1="654.0" x2="292.5" y2="1023.5" stroke="#292929"/><line x1="368.5" y1="654.0" x2="368.5" y2="1023.5" stroke="#292929"/><line x1="443.5" y1="654.0" x2="443.5" y2="1023.5" stroke="#292929"/><line x1="518.5" y1="654.0" x2="518.5" y2="1023.5" stroke="#292929"/><line x1="593.5" y1="654.0" x2="593.5" y2="1023.5" stroke="#292929"/><line x1="668.5" y1="654.0" x2="668.5" y2="1023.5" stroke="#292929"/><line x1="758.5" y1="654.0" x2="758.5" y2="1023.5" stroke="#292929"/><line x1="833.5" y1="654.0" x2="833.5" y2="1023.5" stroke="#292929"/><line x1="908.5" y1="654.0" x2="908.5" y2="1023.5" stroke="#292929"/><line x1="984.5" y1="654.0" x2="984.5" y2="1023.5" stroke="#292929"/><line x1="1059.5" y1="654.0" x2="1059.5" y2="1023.5" stroke="#292929"/><line x1="1134.5" y1="654.0" x2="1134.5" y2="1023.5" stroke="#292929"/><line x1="1224.5" y1="654.0" x2="1224.5" y2="1023.5" stroke="#292929"/><line x1="1299.5" y1="654.0" x2="1299.5" y2="1023.5" stroke="#292929"/><line x1="1374.5" y1="654.0" x2="1374.5" y2="1023.5" stroke="#292929"/><line x1="60" y1="654.5" x2="1410.0" y2="654.5" stroke="#2a2a2a"/><line x1="60" y1="726.5" x2="1410.0" y2="726.5" stroke="#2a2a2a"/><line x1="60" y1="798.5" x2="1410.0" y2="798.5" stroke="#2a2a2a"/><line x1="60" y1="871.5" x2="1410.0" y2="871.5" stroke="#2a2a2a"/><line x1="60" y1="943.5" x2="1410.0" y2="943.5" stroke="#2a2a2a"/><line x1="67.5" y1="654.0" x2="67.5" y2="1023.5" stroke="#3c3c3c"/><line x1="60" y1="1015.5" x2="1410.0" y2="1015.5" stroke="#3c3c3c"/></g>
<path class="series" d="M67.7,711.5 68.8,710.8 70.3,708.6 71.5,699.7 72.5,698.6 73.5,700.5 74.3,707.1 74.7,718.9 75.3,724.8 75.6,739.5 76.2,754.2 77.4,757.1 78.4,754.2 79.1,751.2 79.7,763.0 80.2,769.6 80.9,763.0 82.1,761.5 83.3,758.9 84.1,764.5 85.3,769.6 86.2,776.3 86.8,786.6 87.4,797.6 88.0,783.6 88.3,763.0 88.7,749.8 89.4,748.3 90.0,754.2 90.3,771.8 90.6,789.5 90.6,797.7 90.9,828.6 91.3,859.5 91.9,872.7 93.6,871.2 94.6,875.7 95.3,883.0 96.2,886.7 96.8,880.1 97.4,860.9 97.8,838.9 98.1,821.2 98.4,804.3 98.9,816.8 99.4,822.7 100.0,827.8 101.2,824.2 102.4,819.0 103.4,818.3 104.4,820.5 105.3,825.6 106.4,835.9 107.4,844.8 108.0,851.4 108.9,846.2 109.7,841.1 111.2,838.9 112.2,834.5 113.3,828.6 114.7,829.3 115.6,825.6 116.7,815.3 117.7,806.5 118.6,798.4 119.5,798.4 120.0,816.8 120.6,816.8 120.9,791.8 121.5,774.8 122.1,763.0 123.3,758.6 124.5,748.3 125.5,739.5 126.2,738.7 127.4,745.4 128.6,748.3 129.2,745.4 129.8,733.6 130.6,725.5 132.1,723.6 133.6,721.8 134.5,714.5 135.3,711.5 136.2,713.0 137.1,718.9 138.0,724.8 138.9,729.2 139.5,736.5 140.1,748.3 140.6,757.9 141.2,751.2 142.1,748.3 143.0,748.0 143.9,754.2 145.1,757.1 146.5,758.6 147.7,761.5 148.3,767.4 148.7,777.7 149.2,789.5 149.8,799.8 150.7,808.6 150.7,816.8 151.5,819.7 152.7,819.4 153.6,809.4 153.6,789.5 153.9,777.7 154.5,768.9 155.4,763.0 156.4,757.1 157.4,752.0 158.6,751.2 159.5,755.7 160.7,760.1 161.8,763.8 163.0,761.5 163.9,763.0 164.5,768.9 165.4,774.8 166.0,783.6 166.5,792.5 167.0,799.8 167.7,792.5 168.6,793.9 169.2,786.6 170.1,779.2 171.1,774.8 172.1,773.3 173.0,770.4 173.6,763.0 174.2,755.7 175.1,754.2 176.0,758.6 176.6,763.0 177.4,761.5 178.3,766.0 178.9,763.0 179.5,768.9 180.1,780.7 180.7,792.5 181.3,807.2 181.9,818.3 182.4,830.0 183.0,842.5 183.6,837.4 184.2,824.2 184.8,792.5 185.1,774.8 185.8,760.1 186.6,745.4 187.4,735.1 188.8,729.9 190.2,728.0 191.7,727.7 192.7,723.3 193.6,718.9 194.5,721.8 195.4,729.2 196.3,738.0 196.9,748.3 197.7,758.6 198.3,768.9 198.9,777.7 199.8,777.7 200.4,763.0 201.0,752.7 201.9,752.7 202.8,757.1 203.6,761.5 204.5,755.7 205.7,752.7 206.6,746.8 207.6,746.8 208.6,751.2 209.2,763.0 209.7,777.7 210.1,789.5 210.6,798.3 211.1,789.5 211.6,774.8 212.0,760.1 212.5,748.3 213.3,739.5 214.5,735.8 216.0,733.6 217.2,732.4 217.8,739.5 218.9,739.5 219.7,730.6 220.7,728.0 221.9,732.1 223.4,735.1 224.5,737.3 225.7,735.8 226.3,742.4 227.0,751.2 227.8,761.5 228.7,763.0 229.2,754.2 230.1,746.8 231.0,743.9 232.5,744.2 233.7,740.9 234.8,736.2 236.3,735.8 237.3,739.5 238.7,743.9 239.8,745.4 240.6,754.2 241.3,763.0 242.8,763.0 243.4,754.2 244.3,748.3 245.7,746.8 247.2,745.7 248.7,744.6 250.1,742.4 251.0,739.5 251.6,727.7 252.2,715.9 253.1,704.2 254.0,695.3 255.1,690.9 256.3,685.0 257.2,674.7 258.1,668.1 259.0,673.2 259.6,685.0 260.1,696.8 260.7,708.6 261.6,713.7 262.8,718.9 263.4,727.7 264.3,733.6 264.9,738.7 266.3,740.2 268.2,741.7 269.7,743.1 270.5,743.9 271.1,726.2 271.7,725.5 272.3,733.6 272.9,735.1 273.5,721.8 274.1,714.5 275.2,710.0 276.0,714.5 276.4,718.9 277.3,713.0 278.5,708.6 280.0,704.9 281.1,706.4 282.3,709.3 283.8,711.5 284.8,717.4 285.5,727.7 286.1,742.4 286.7,754.2 287.6,762.3 288.5,763.0 289.1,751.2 289.7,742.4 290.6,737.3 291.4,737.3 292.3,742.4 293.2,746.8 294.4,751.2 295.6,751.2 296.4,746.8 297.3,740.2 298.5,737.3 299.7,737.3 300.3,745.4 300.9,755.7 301.7,758.6 302.6,755.7 303.2,745.4 304.1,738.7 305.3,736.8 306.2,737.3 307.0,740.9 308.2,743.9 309.1,751.2 309.7,760.1 310.3,760.8 310.9,751.2 311.7,746.8 312.9,744.6 314.1,740.9 315.0,738.0 315.9,742.4 316.7,751.2 317.3,754.2 317.9,748.3 318.8,748.3 319.4,755.7 320.3,766.0 321.2,772.6 322.0,771.8 322.6,757.1 323.2,743.9 324.1,743.1 325.3,744.6 326.8,742.4 327.9,738.0 329.1,735.1 330.3,732.1 331.2,726.2 332.1,720.3 332.9,718.9 333.5,710.0 334.4,702.7 335.6,696.8 336.5,690.9 337.6,685.0 338.5,677.7 339.7,671.8 340.9,670.3 341.8,671.8 342.4,680.6 342.9,683.5 343.5,690.9 344.4,702.7 345.3,715.9 345.9,732.1 346.5,743.9 347.1,749.8 347.7,743.9 347.9,727.7 348.5,721.8 349.4,717.4 350.3,711.5 350.9,702.7 351.8,696.8 352.9,696.1 354.1,698.3 355.0,702.7 355.9,704.2 356.8,711.5 358.0,713.0 358.5,718.9 359.1,724.8 360.0,724.8 360.6,718.1 361.2,720.3 361.8,729.2 362.7,732.8 363.5,729.2 364.1,721.8 365.0,720.3 365.9,723.3 366.8,725.5 368.0,727.7 369.1,728.0 370.9,726.2 372.7,725.0 373.8,721.8 374.4,715.9 375.3,711.5 376.2,711.5 377.1,714.5 377.7,708.6 378.3,707.1 378.9,715.9 379.7,721.8 380.6,727.7 381.5,732.8 382.7,733.6 383.6,739.5 384.4,744.6 385.3,746.8 386.5,746.1 387.1,754.2 388.0,760.1 388.9,763.0 389.4,768.9 390.0,774.8 390.5,786.6 390.8,798.3 390.8,805.0 390.9,815.3 391.2,825.6 392.1,828.6 392.4,838.9 393.3,839.6 393.6,827.1 394.2,822.7 395.0,822.7 395.6,829.3 396.2,828.6 396.5,819.7 397.1,811.6 398.9,810.9 399.2,799.1 399.5,798.3 399.7,777.7 400.0,760.1 400.6,742.4 401.2,729.2 401.8,720.3 402.7,711.5 403.6,704.2 404.8,699.7 405.9,699.0 407.1,701.2 408.0,699.7 409.2,699.0 410.1,698.3 410.9,690.9 411.8,689.4 412.7,690.2 413.3,698.3 413.9,704.2 414.2,718.9 414.5,733.6 414.8,745.4 415.3,752.7 416.2,754.2 416.8,760.1 417.7,761.5 418.3,755.7 419.2,755.7 419.8,763.0 420.6,771.8 421.2,780.7 421.8,788.0 422.4,794.7 423.0,785.1 423.6,774.8 424.5,771.8 425.4,766.0 425.9,761.5 426.8,766.0 427.4,771.8 428.0,774.8 428.9,768.9 429.8,763.0 430.9,758.6 432.1,754.2 433.0,749.8 433.9,743.9 435.1,739.5 436.2,735.1 437.4,733.6 438.6,732.8 439.5,736.5 440.1,743.1 440.7,733.6 441.5,729.2 442.4,728.4 443.3,732.1 444.5,733.6 446.0,732.1 447.4,730.6 448.6,727.7 449.5,723.3 450.7,722.5 451.8,723.3 453.0,721.8 454.2,720.6 455.4,723.3 456.6,726.2 457.4,730.6 458.0,736.5 458.6,745.4 459.2,752.7 460.4,749.8 461.3,752.7 462.4,749.8 463.3,752.0 464.5,749.0 465.7,749.8 466.6,743.9 467.4,746.8 468.3,742.4 469.5,742.4 470.4,739.5 471.4,742.7 472.5,743.4 473.4,739.7 474.3,733.8 475.2,726.5 475.8,723.5 476.4,729.4 477.2,730.9 477.8,738.3 478.4,747.1 479.0,755.9 479.9,758.9 480.2,770.6 481.1,773.6 481.7,782.4 482.2,788.3 482.8,782.4 483.4,785.4 484.3,780.2 485.5,775.1 486.4,770.6 487.5,768.4 488.7,769.2 489.3,776.5 489.9,783.1 490.5,782.4 491.1,773.6 491.4,763.3 492.0,751.5 492.8,742.7 493.7,736.8 494.9,736.8 496.1,739.0 497.3,741.9 498.1,743.4 499.3,740.5 500.8,738.3 502.6,738.0 504.0,739.0 505.2,741.9 506.7,744.2 508.4,745.9 509.9,743.4 510.8,743.4 511.4,748.6 512.0,755.9 512.9,758.9 513.7,755.9 515.2,754.5 516.1,750.0 516.7,742.7 517.6,741.9 518.2,748.6 518.7,757.4 519.3,763.3 520.2,767.7 521.4,772.1 522.3,772.8 523.2,769.2 524.0,769.2 524.6,776.5 525.5,780.2 526.7,780.2 527.3,785.4 528.2,789.8 528.8,795.7 529.0,804.5 529.6,813.3 530.2,819.2 531.1,825.1 532.0,825.8 532.6,819.2 533.5,814.8 534.3,817.0 535.5,817.7 536.1,823.6 537.0,830.2 537.9,828.0 538.8,827.3 539.6,833.2 540.5,833.2 541.4,829.5 542.3,825.1 543.5,821.4 544.4,817.7 544.9,810.4 545.8,806.0 546.7,801.5 547.3,795.7 548.2,791.2 549.1,787.6 549.9,780.9 550.8,774.3 551.7,773.6 552.3,776.5 552.9,783.9 553.8,789.8 554.7,794.2 555.2,800.1 555.8,807.4 556.7,814.8 557.6,817.7 558.5,820.7 559.1,817.7 559.7,826.6 560.2,827.3 560.5,814.8 560.8,800.1 561.4,786.8 562.3,786.1 563.2,786.5 563.5,795.7 564.1,797.1 564.4,808.9 565.0,817.7 565.5,826.6 566.1,841.8 566.7,856.5 567.6,865.4 568.5,869.8 569.1,880.1 569.7,890.4 570.8,890.4 571.1,877.1 571.4,862.4 571.7,844.8 572.0,835.4 572.3,822.1 572.9,808.9 573.5,797.1 574.4,785.4 575.0,776.5 575.8,767.7 576.7,757.4 577.6,751.5 578.8,745.6 580.0,739.7 581.1,735.3 582.0,730.9 582.6,723.5 583.5,717.7 584.7,712.5 585.9,710.6 587.3,710.3 588.5,711.8 589.1,717.7 589.7,726.5 590.0,738.3 590.6,747.8 591.2,747.8 591.7,742.7 592.6,741.5 593.5,743.4 594.1,750.0 595.0,753.0 595.9,752.2 596.7,757.4 597.6,758.1 598.2,751.5 598.8,744.2 599.7,739.7 600.9,736.1 602.3,733.8 603.5,736.8 604.4,740.5 605.6,744.2 606.5,739.7 607.3,731.6 608.2,730.2 609.1,732.4 610.0,737.5 611.2,738.3 612.6,738.6 614.1,738.0 615.3,739.7 615.9,744.2 616.5,751.5 617.1,758.9 617.9,767.7 618.8,775.1 619.7,782.4 620.3,789.8 620.9,798.6 621.2,808.2 622.4,808.9 622.9,816.3 623.2,823.6 623.8,835.4 624.1,847.2 625.0,846.4 625.9,842.8 626.2,832.5 626.5,823.6 627.1,811.8 627.4,797.1 628.2,782.4 628.8,770.6 629.7,758.9 630.3,750.0 630.9,739.7 631.8,729.4 632.7,719.1 633.5,711.8 634.7,705.9 635.6,702.2 636.8,702.2 637.7,705.9 638.5,711.0 639.7,714.0 640.9,717.7 642.1,719.9 643.5,719.1 644.7,722.1 645.6,728.0 646.2,735.3 647.4,735.3 648.3,729.4 648.8,720.6 649.7,711.8 650.2,706.9 650.9,702.0 651.7,695.2 652.9,694.7 653.5,704.0 653.9,711.8 653.9,722.1 654.4,733.8 655.0,745.6 655.6,751.5 656.2,759.6 656.8,750.0 657.7,750.0 658.3,760.3 658.6,773.6 659.1,783.9 659.7,788.3 661.2,788.3 661.8,779.5 662.7,767.7 663.6,766.2 664.4,767.7 664.7,785.4 665.3,786.1 665.6,767.7 665.9,748.6 666.5,732.4 667.1,722.1 668.0,720.3 668.9,722.1 669.4,729.4 670.3,732.4 671.2,739.7 671.8,729.4 673.1,728.3 673.7,738.6 674.8,737.8 675.1,729.8 676.6,728.3 677.8,730.5 679.2,731.2 680.1,723.9 681.0,719.5 681.9,720.2 682.8,723.9 683.4,731.2 684.2,738.6 685.1,740.1 686.0,735.6 687.2,732.0 688.4,730.5 689.3,734.2 690.1,738.6 691.0,745.2 691.6,749.6 692.2,744.5 692.8,734.2 693.1,723.9 693.7,713.6 694.6,707.7 695.7,704.4 697.2,703.6 698.4,704.7 699.3,710.6 700.1,716.5 701.3,718.0 702.5,715.8 703.4,712.8 704.6,713.6 705.4,715.0 706.6,714.3 707.5,719.5 708.7,717.2 709.6,716.5 710.4,719.2 711.9,718.0 713.1,715.8 714.0,712.1 714.9,706.9 715.7,709.2 716.3,715.0 717.5,718.0 718.7,722.4 719.9,724.6 720.7,729.8 721.6,735.6 722.5,741.5 723.4,745.9 724.6,748.1 725.7,751.1 726.9,750.4 727.8,746.7 729.0,745.2 729.6,738.6 730.5,731.2 731.3,725.3 732.2,719.5 733.1,713.6 734.0,707.7 734.9,701.8 736.1,699.6 737.5,700.0 738.7,701.8 739.9,704.7 741.1,707.7 741.9,712.1 742.5,719.5 743.1,726.8 744.0,730.5 745.2,732.7 746.1,735.6 746.6,743.0 747.2,750.4 747.8,760.7 748.4,768.0 749.3,769.5 749.9,766.5 750.8,773.9 751.7,779.1 752.5,771.0 753.1,762.1 753.7,751.8 754.3,741.5 754.9,729.8 755.2,719.5 756.1,710.6 757.2,707.7 758.7,705.5 760.2,703.6 761.7,704.0 762.8,706.2 764.0,707.7 764.9,713.6 766.1,712.1 767.0,710.6 767.5,718.0 768.1,726.8 769.0,720.9 769.9,716.5 770.8,712.1 772.0,709.9 773.1,710.6 774.0,715.0 774.6,723.9 775.2,735.6 775.8,745.9 776.4,754.8 777.3,756.2 778.1,753.3 779.0,750.4 779.9,747.4 780.8,741.5 781.4,732.7 782.3,725.3 783.1,724.2 784.0,725.3 784.6,734.2 785.2,744.5 785.5,756.2 785.9,765.8 786.7,765.1 787.3,753.3 788.1,744.5 788.7,734.2 789.6,725.3 790.8,722.4 792.0,720.2 792.9,715.0 793.7,709.2 794.9,707.7 796.1,704.7 797.3,700.3 798.5,697.4 799.3,692.2 800.5,690.8 801.7,691.2 802.9,692.2 804.0,694.4 804.6,700.3 805.5,707.7 806.4,715.0 807.3,720.9 808.2,725.3 809.3,726.8 810.2,732.7 811.1,734.9 812.0,728.3 812.9,720.9 813.8,716.5 814.9,715.8 816.1,715.0 817.0,707.7 817.9,698.8 818.8,693.0 819.9,688.5 821.4,687.1 822.6,685.6 823.8,682.7 825.2,680.5 826.7,679.0 827.6,682.7 828.2,691.5 828.8,701.8 829.4,713.6 829.6,726.8 829.9,747.4 830.2,768.0 830.5,780.5 831.1,768.0 831.4,750.4 831.7,740.1 832.6,741.5 833.2,747.4 833.8,757.0 834.7,750.4 835.2,741.5 835.8,750.4 836.4,741.5 837.0,737.1 838.2,732.7 839.1,728.3 839.7,722.4 840.2,715.0 840.8,707.7 841.7,702.5 842.6,701.8 843.5,706.2 844.4,704.4 845.5,704.0 846.4,709.2 847.3,715.0 848.5,716.5 849.4,722.4 850.5,723.1 851.1,716.5 851.7,707.7 852.3,698.8 853.2,696.6 854.4,700.3 855.3,695.9 856.4,696.2 857.3,700.3 858.2,706.2 859.1,712.8 860.0,704.7 861.1,704.0 862.0,709.2 862.6,719.5 863.2,727.5 864.7,727.5 865.3,716.5 865.9,703.3 866.4,694.4 867.3,688.5 868.5,684.1 870.0,681.2 871.2,675.3 872.3,672.4 873.5,670.9 875.4,671.0 876.5,674.7 877.7,676.5 879.2,676.9 880.4,675.5 881.5,675.9 882.7,679.1 884.2,682.1 885.7,684.3 886.5,682.1 887.4,675.5 888.3,676.2 889.2,679.9 890.4,677.7 891.8,678.0 893.3,678.4 894.2,679.1 894.8,688.0 895.4,696.8 896.3,697.5 896.8,691.6 897.4,690.9 898.0,698.3 899.2,701.2 899.8,713.0 900.1,724.8 900.7,735.1 901.3,745.4 901.8,755.7 902.4,766.0 903.0,776.3 903.6,786.6 904.5,779.2 905.4,770.4 906.3,763.0 907.1,758.6 908.0,754.2 909.2,751.2 910.4,750.5 911.3,752.7 912.2,755.7 913.0,751.2 913.6,742.4 914.5,730.6 915.1,720.3 916.0,713.7 916.9,714.5 917.4,721.8 918.3,730.6 919.2,738.0 920.4,740.9 921.3,751.2 922.2,766.0 922.7,782.1 923.0,815.3 923.6,825.6 924.2,824.9 924.5,809.4 924.8,777.7 925.1,748.3 925.7,735.1 926.6,732.8 927.5,736.5 928.0,745.4 928.9,757.1 929.8,766.0 931.0,774.8 931.9,786.6 932.5,796.9 933.0,807.2 933.6,816.8 934.2,824.2 934.8,816.8 936.0,815.3 937.2,814.6 938.3,811.6 939.5,808.7 940.7,806.5 941.0,795.4 941.3,777.7 941.6,766.0 942.5,763.8 943.3,764.5 943.9,776.3 944.5,776.3 944.8,755.7 945.4,733.6 946.0,721.8 946.9,717.4 948.1,715.2 948.9,718.9 949.5,714.5 950.4,705.6 951.3,705.6 951.9,714.5 952.5,723.3 953.1,730.6 953.9,739.5 954.8,748.3 955.7,752.7 956.6,754.2 957.8,751.2 958.9,745.4 960.1,743.6 961.0,745.4 961.6,751.2 962.2,760.1 963.1,770.4 963.7,780.7 964.5,785.1 965.4,789.5 966.3,786.6 967.2,779.2 968.1,770.4 969.0,760.1 969.8,751.2 970.7,746.8 971.3,754.2 972.2,763.0 973.1,771.8 974.0,779.2 974.8,785.1 975.7,789.5 976.3,796.9 976.9,807.2 977.5,792.5 978.1,776.3 978.7,764.5 979.6,764.5 980.1,780.7 980.7,795.4 981.3,805.7 981.9,810.1 982.5,798.3 983.1,782.1 983.7,770.4 984.3,777.7 984.6,792.5 985.1,807.2 985.7,812.3 986.3,801.3 986.6,780.7 987.2,764.5 988.1,763.8 988.4,777.7 989.0,789.5 989.6,774.8 989.9,763.8 991.0,764.5 991.9,768.9 992.8,777.7 993.7,786.6 994.6,787.3 995.4,779.2 996.3,773.3 997.2,777.7 997.8,771.8 998.4,761.5 999.0,751.2 999.9,742.4 1000.7,733.6 1001.6,729.2 1002.5,726.2 1003.1,715.9 1003.7,702.7 1004.3,692.4 1005.2,683.5 1006.0,682.8 1006.9,688.0 1007.8,690.9 1008.7,695.3 1009.6,696.8 1010.5,690.2 1011.6,690.2 1012.2,698.3 1012.8,710.0 1013.1,729.2 1013.4,748.3 1013.7,761.5 1014.3,763.0 1014.9,771.1 1015.5,755.7 1016.1,749.8 1016.6,754.2 1017.2,758.6 1017.8,748.3 1018.4,733.6 1019.0,721.1 1019.9,721.1 1020.5,730.6 1021.1,739.5 1021.9,742.4 1022.5,749.8 1023.4,742.4 1024.0,732.1 1024.9,724.8 1025.5,723.3 1026.4,732.1 1026.9,723.3 1027.8,715.9 1028.7,715.2 1029.3,718.9 1029.9,710.0 1030.8,707.8 1031.6,711.5 1032.8,713.7 1034.3,715.9 1035.8,718.1 1036.9,716.7 1038.1,715.9 1039.0,715.6 1039.6,721.8 1040.5,727.7 1041.7,731.4 1042.8,732.1 1043.7,727.7 1044.6,721.8 1045.5,715.9 1046.4,713.7 1047.5,716.7 1048.4,721.8 1049.0,730.6 1049.6,739.5 1050.2,751.2 1050.8,766.0 1051.1,783.6 1051.4,798.3 1051.4,813.8 1052.0,821.9 1052.5,821.2 1053.1,812.4 1053.1,792.5 1053.4,774.8 1053.7,760.1 1054.3,751.2 1055.5,749.8 1056.4,743.9 1057.3,736.5 1058.1,730.6 1059.3,726.2 1060.5,724.0 1062.0,724.0 1062.6,729.2 1063.4,736.5 1064.3,745.4 1065.2,749.8 1066.1,745.4 1067.0,743.9 1067.9,746.8 1068.7,750.5 1069.6,752.0 1070.8,749.0 1072.3,746.8 1073.4,743.9 1074.6,740.9 1075.5,736.5 1076.4,734.3 1077.7,734.7 1078.8,734.7 1080.0,736.2 1080.6,745.0 1081.2,755.3 1081.8,770.0 1082.4,784.8 1083.0,796.5 1083.5,811.2 1084.1,826.0 1084.7,837.7 1085.3,845.1 1085.9,850.2 1086.5,840.7 1087.1,823.0 1087.7,808.3 1088.5,798.0 1089.1,799.5 1089.4,815.7 1089.7,834.8 1090.3,845.1 1090.9,837.7 1091.5,823.0 1092.1,811.2 1092.7,799.5 1093.5,799.5 1094.4,805.4 1095.3,809.8 1095.9,814.2 1096.0,837.7 1096.2,885.3 1096.8,888.3 1097.1,914.8 1097.4,938.3 1097.7,953.0 1098.0,968.5 1098.8,967.7 1099.7,966.3 1100.0,958.9 1100.3,947.1 1100.6,933.9 1101.2,920.6 1101.8,908.9 1102.4,900.0 1103.3,889.7 1104.1,879.4 1104.7,870.6 1105.3,868.4 1106.2,869.1 1107.1,872.8 1108.0,867.7 1108.9,863.2 1110.0,863.2 1110.9,867.7 1111.2,879.4 1111.8,882.4 1112.1,903.0 1112.7,929.5 1113.0,950.1 1113.6,970.7 1114.2,988.3 1115.3,989.1 1115.6,976.6 1116.5,967.7 1116.8,958.9 1117.7,944.2 1118.0,929.5 1118.6,919.2 1119.2,913.3 1120.3,909.6 1121.8,908.1 1122.7,904.5 1123.6,900.0 1124.5,895.6 1125.3,892.7 1126.5,891.5 1127.7,894.2 1128.6,897.1 1129.2,902.2 1130.0,902.2 1130.3,894.2 1130.9,882.4 1131.5,872.1 1132.4,861.8 1133.3,857.4 1134.5,852.9 1135.3,849.5 1136.2,853.2 1137.1,852.5 1137.7,845.1 1138.6,837.7 1139.8,837.0 1140.3,833.3 1140.9,828.9 1141.5,834.8 1142.1,845.1 1143.6,845.8 1144.5,849.5 1144.8,867.2 1145.1,876.5 1145.3,889.0 1145.5,876.5 1145.6,842.1 1145.9,823.0 1146.5,808.3 1147.1,796.5 1148.0,786.2 1148.9,777.4 1150.1,770.0 1151.5,764.2 1152.7,758.3 1153.6,750.9 1155.1,750.9 1156.8,748.7 1158.0,746.5 1159.8,745.8 1161.2,743.5 1162.7,740.6 1164.2,738.4 1165.7,737.7 1167.1,738.4 1168.3,740.6 1169.5,742.1 1170.7,740.6 1172.1,738.4 1173.6,736.9 1174.8,738.4 1176.0,739.1 1177.4,738.8 1178.9,736.9 1180.4,735.0 1181.8,735.5 1183.3,737.7 1184.8,738.4 1185.7,742.1 1186.6,745.8 1187.7,748.0 1189.2,749.4 1190.7,750.2 1192.1,749.4 1193.3,746.5 1194.5,743.5 1195.7,740.6 1196.9,738.4 1198.0,739.1 1199.5,740.6 1201.3,740.6 1202.2,743.5 1203.0,746.5 1204.2,748.7 1205.4,750.9 1206.9,750.6 1208.3,752.1 1209.8,750.2 1211.3,751.2 1212.8,751.6 1213.9,753.1 1214.5,758.3 1215.1,765.6 1215.7,775.9 1216.3,786.2 1216.9,796.5 1217.5,805.4 1218.3,812.7 1219.2,818.6 1219.8,822.3 1221.0,820.1 1222.2,818.6 1223.3,821.5 1224.5,820.1 1226.0,818.6 1227.5,817.9 1228.4,820.1 1229.2,823.0 1230.1,826.0 1231.3,826.0 1231.9,820.1 1232.5,811.2 1233.1,799.5 1233.4,787.7 1233.9,775.9 1234.2,765.6 1234.8,759.7 1235.7,759.4 1236.6,764.2 1237.5,767.1 1238.1,773.0 1238.7,767.1 1239.5,765.6 1240.4,768.6 1241.3,773.7 1242.2,775.9 1243.4,777.4 1244.2,780.3 1244.8,787.7 1245.1,795.1 1245.7,787.7 1246.3,780.3 1247.2,779.6 1248.1,783.3 1249.0,787.7 1249.5,791.4 1250.4,786.2 1251.3,784.8 1252.2,778.9 1252.8,786.2 1253.4,793.6 1254.0,784.8 1254.5,775.9 1255.1,770.0 1256.0,765.6 1256.9,761.2" fill="none" stroke="#2a4762" stroke-width="1.5" stroke-linejoin="round" stroke-linecap="butt"/>
<path class="series" d="M1256.9,761.2 1257.8,756.8 1258.7,752.4 1259.6,749.4 1260.4,750.2 1261.3,753.8 1262.8,755.3 1264.3,757.5 1265.1,761.2 1266.3,762.7 1267.2,758.3 1268.1,753.1 1269.0,752.4 1269.6,761.2 1270.1,770.0 1270.7,775.9 1271.6,780.3 1272.5,783.3 1273.4,786.2 1274.3,793.6 1275.2,796.5 1276.0,790.6 1276.9,792.1 1277.5,798.0 1278.4,802.4 1279.0,811.2 1279.6,826.0 1279.9,839.7 1280.8,844.1 1282.0,854.4 1283.2,864.0 1284.0,869.2 1284.3,889.8 1284.9,907.4 1285.5,922.1 1286.1,928.0 1286.7,935.4 1287.9,934.6 1288.8,928.0 1289.3,922.1 1289.9,910.4 1290.5,901.5 1291.7,900.1 1292.3,883.9 1292.9,872.1 1293.8,861.8 1294.3,847.1 1294.9,832.4 1295.2,811.3 1295.5,796.6 1296.4,784.8 1297.3,773.0 1298.2,761.2 1299.1,749.5 1299.9,742.1 1300.8,735.5 1302.3,734.8 1302.9,725.9 1303.5,714.2 1304.1,702.4 1304.9,695.0 1305.8,695.8 1306.4,705.3 1307.0,718.6 1307.3,728.9 1307.9,712.7 1308.5,714.2 1308.8,728.9 1309.1,743.6 1309.7,755.4 1310.2,765.7 1311.1,758.3 1312.0,756.1 1312.6,764.2 1313.2,773.0 1314.1,773.0 1314.7,765.7 1315.5,759.8 1316.1,764.2 1316.4,776.0 1317.3,787.7 1318.2,789.9 1319.1,784.8 1320.0,781.8 1320.8,778.9 1321.7,773.8 1322.6,778.9 1323.2,790.7 1324.1,793.6 1325.0,793.6 1325.3,781.8 1325.5,764.2 1326.1,749.5 1326.7,736.2 1327.3,725.9 1327.9,714.2 1328.8,702.4 1329.4,689.1 1330.3,684.0 1331.1,684.7 1331.7,693.5 1332.3,705.3 1332.9,692.1 1333.8,692.1 1334.1,708.3 1334.4,731.8 1334.7,752.4 1335.0,764.2 1335.3,761.2 1335.6,776.0 1336.1,796.6 1337.0,809.8 1337.9,820.1 1338.5,836.8 1339.1,847.1 1340.3,854.4 1341.1,847.1 1342.0,836.8 1342.6,814.2 1343.2,802.5 1343.8,790.7 1344.7,781.8 1345.9,774.5 1347.3,771.5 1348.5,767.1 1349.4,761.2 1350.3,753.9 1351.2,745.1 1352.0,744.3 1352.6,752.4 1353.5,758.3 1354.4,759.8 1355.0,770.1 1355.6,778.9 1356.2,784.8 1356.7,773.0 1357.0,758.3 1357.3,743.6 1357.9,734.8 1358.5,724.5 1359.4,714.2 1360.3,703.8 1361.2,699.4 1362.3,697.2 1363.5,699.4 1364.4,706.8 1365.3,705.3 1365.9,690.6 1366.5,681.8 1367.3,681.5 1367.6,699.4 1367.9,717.1 1368.2,743.6 1368.5,773.0 1368.8,802.5 1369.1,833.8 1369.7,842.7 1370.9,839.7 1372.1,835.3 1372.9,830.9 1373.2,814.2 1374.1,802.5 1375.0,795.1 1376.2,787.7 1377.4,781.8 1378.5,778.9 1379.7,779.6 1380.9,776.7 1381.8,777.4 1382.6,781.8 1383.2,792.1 1383.8,802.5 1384.7,812.8 1385.3,813.5 1385.9,802.5 1386.8,795.8 1387.9,795.1 1388.8,802.5 1389.7,803.2 1390.3,811.3 1390.6,823.1 1390.9,836.8 1391.5,848.5 1392.1,853.0 1393.0,854.4 1393.5,866.2 1394.1,880.9 1394.7,894.2 1395.3,903.0 1396.5,907.4 1397.7,916.2 1398.5,922.1 1399.1,933.9 1399.7,944.2 1400.9,950.1 1401.5,957.5 1402.1,963.3 1402.7,973.6 1403.8,973.6 1404.4,967.8 1405.3,972.2 1405.9,966.3 1406.5,954.5 1407.4,945.7 1408.3,933.9 1409.1,922.1 1409.7,913.3 1410.0,908.6" fill="none" stroke="#447eb0" stroke-width="1.5" stroke-linejoin="round" stroke-linecap="butt"/>
<circle cx="615" cy="629.90" r="7.5" fill="#2d4661" stroke="#4682b4" stroke-width="1"/>
<text x="629.3" y="634.40" class="lg" letter-spacing="0.12">TMP_Terasse Luftfeuchtigkeit</text>
<g class="labels" style="opacity:.999"><text transform="translate(56.2,657) scale(0.955,1)" text-anchor="end" class="tk">100</text>
<text transform="translate(56.2,730) scale(0.955,1)" text-anchor="end" class="tk">90</text>
<text transform="translate(56.2,802) scale(0.955,1)" text-anchor="end" class="tk">80</text>
<text transform="translate(56.2,874) scale(0.955,1)" text-anchor="end" class="tk">70</text>
<text transform="translate(56.2,946) scale(0.955,1)" text-anchor="end" class="tk">60</text>
<text transform="translate(56.2,1019) scale(0.955,1)" text-anchor="end" class="tk">50</text>
<text transform="translate(67.20,1037) scale(0.925,1)" text-anchor="middle" class="tk b">November</text>
<text transform="translate(142.20,1037) scale(0.955,1)" text-anchor="middle" class="tk">6. Nov.</text>
<text transform="translate(217.20,1037) scale(0.955,1)" text-anchor="middle" class="tk">11. Nov.</text>
<text transform="translate(292.20,1037) scale(0.955,1)" text-anchor="middle" class="tk">16. Nov.</text>
<text transform="translate(368.20,1037) scale(0.955,1)" text-anchor="middle" class="tk">21. Nov.</text>
<text transform="translate(443.20,1037) scale(0.955,1)" text-anchor="middle" class="tk">26. Nov.</text>
<text transform="translate(518.20,1037) scale(0.925,1)" text-anchor="middle" class="tk b">Dezember</text>
<text transform="translate(593.20,1037) scale(0.955,1)" text-anchor="middle" class="tk">6. Dez.</text>
<text transform="translate(668.20,1037) scale(0.955,1)" text-anchor="middle" class="tk">11. Dez.</text>
<text transform="translate(758.20,1037) scale(0.955,1)" text-anchor="middle" class="tk">17. Dez.</text>
<text transform="translate(833.20,1037) scale(0.955,1)" text-anchor="middle" class="tk">22. Dez.</text>
<text transform="translate(908.20,1037) scale(0.955,1)" text-anchor="middle" class="tk">27. Dez.</text>
<text transform="translate(984.20,1037) scale(0.925,1)" text-anchor="middle" class="tk b">Januar</text>
<text transform="translate(1059.20,1037) scale(0.955,1)" text-anchor="middle" class="tk">6. Jan.</text>
<text transform="translate(1134.20,1037) scale(0.955,1)" text-anchor="middle" class="tk">11. Jan.</text>
<text transform="translate(1224.20,1037) scale(0.955,1)" text-anchor="middle" class="tk">17. Jan.</text>
<text transform="translate(1299.20,1037) scale(0.955,1)" text-anchor="middle" class="tk">22. Jan.</text>
<text transform="translate(1374.20,1037) scale(0.955,1)" text-anchor="middle" class="tk">27. Jan.</text>
<text transform="translate(24.5,835.00) rotate(-90) scale(0.8,1)" text-anchor="middle" class="tk">%</text></g>
</g>
</svg>
</section>
</main>
<div class="edge" style="left:1426px;background:#020d12"></div>
<div class="edge" style="left:1427px;background:#f66b11"></div>
<div class="edge" style="left:1428px;background:linear-gradient(#5b8fc8 0,#6698cb 150px,#9bbcd6 300px,#b5c4cf 469px,#3f2616 470px,#3f2616 585px,#b08a70 587px,#94705e 1053px)"></div>
</div>
</body>
</html>
